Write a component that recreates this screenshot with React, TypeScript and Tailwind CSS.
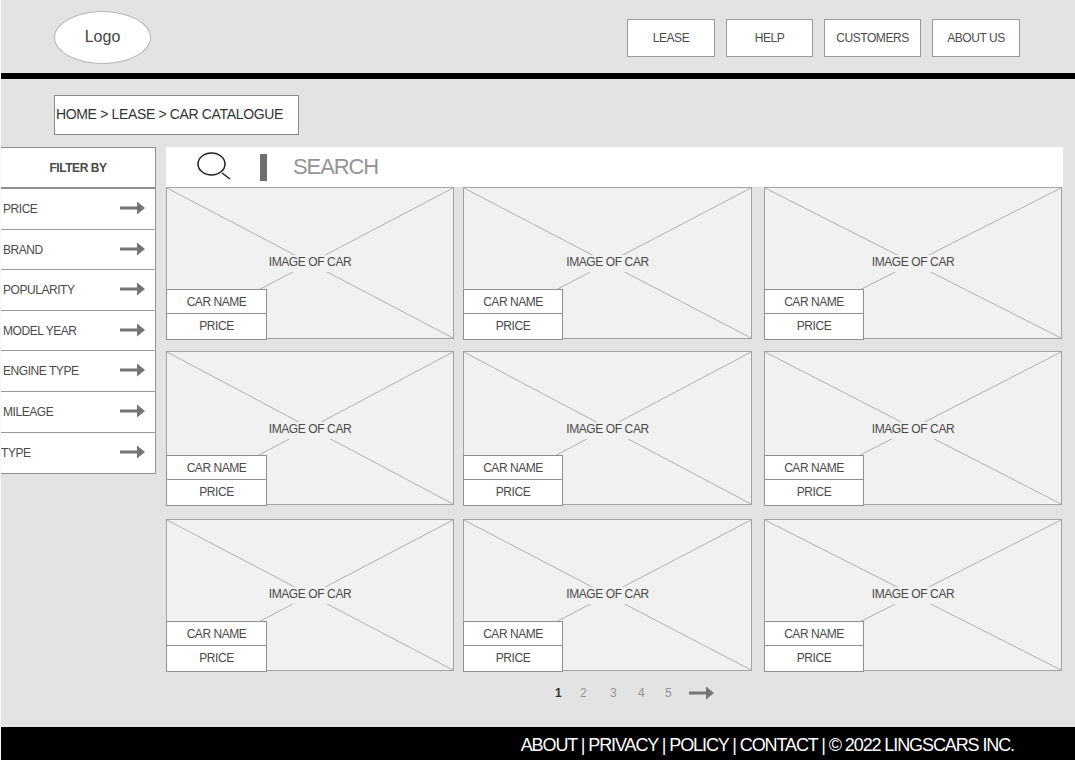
const navItems = [
  { name: "LEASE", width: "w-[88px]" },
  { name: "HELP", width: "w-[87px]" },
  { name: "CUSTOMERS", width: "w-[97px]" },
  { name: "ABOUT US", width: "w-[88px]" },
]

const filters = [
  { name: "PRICE", height: "h-[41px]", pad: "pl-[2px]" },
  { name: "BRAND", height: "h-[40px]", pad: "pl-[2px]" },
  { name: "POPULARITY", height: "h-[41px]", pad: "pl-[2px]" },
  { name: "MODEL YEAR", height: "h-[40px]", pad: "pl-[2px]" },
  { name: "ENGINE TYPE", height: "h-[41px]", pad: "pl-[2px]" },
  { name: "MILEAGE", height: "h-[41px]", pad: "pl-[2px]" },
  { name: "TYPE", height: "h-[40px]", pad: "pl-0" },
]

const rows = [
  { height: "h-[152px]", labelTop: "top-[67px]", margin: "" },
  { height: "h-[154px]", labelTop: "top-[70px]", margin: "mt-[12px]" },
  { height: "h-[152px]", labelTop: "top-[67px]", margin: "mt-[14px]" },
]

const columns = [
  { width: "w-[288px]", tag: "w-[101px]" },
  { width: "ml-[9px] w-[289px]", tag: "w-[100px]" },
  { width: "ml-[12px] w-[298px]", tag: "w-[100px]" },
]

function Arrow({ className }: { className: string }) {
  return (
    <svg viewBox="0 0 25 14" className={className} fill="#757575">
      <rect x="0" y="5.5" width="20" height="3" />
      <path d="M17 0.5 L25 7 L17 13.5 Z" />
    </svg>
  )
}

function CarCard({ height, width, tag, labelTop }: { height: string; width: string; tag: string; labelTop: string }) {
  return (
    <div className={`relative ${height} ${width} border border-[#a3a3a3] bg-[#f1f1f1]`}>
      <svg className="absolute inset-0 h-full w-full" preserveAspectRatio="none" viewBox="0 0 100 100">
        <line x1="0" y1="0" x2="100" y2="100" stroke="#b0b0b0" strokeWidth="1" vectorEffect="non-scaling-stroke" />
        <line x1="100" y1="0" x2="0" y2="100" stroke="#b0b0b0" strokeWidth="1" vectorEffect="non-scaling-stroke" />
      </svg>
      <div className={`absolute inset-x-0 ${labelTop} flex justify-center`}>
        <span className="h-[17px] bg-[#f1f1f1] px-[6px] text-[12px] leading-[15px] tracking-[-0.4px] text-[#4a4a4a]">
          IMAGE OF CAR
        </span>
      </div>
      <div className={`absolute bottom-[-2px] left-[-1px] ${tag} border border-[#8f8f8f] bg-white text-center text-[12px] tracking-[-0.45px] text-[#4a4a4a]`}>
        <div className="flex h-[24px] items-center justify-center border-b border-[#8f8f8f]">CAR NAME</div>
        <div className="flex h-[25px] items-center justify-center pb-[1px]">PRICE</div>
      </div>
    </div>
  )
}

export default function App() {
  return (
    <div className="relative flex h-[760px] w-[1075px] flex-col overflow-hidden border-l border-[#f7f7f7] bg-[#e3e3e3] font-['Liberation_Sans',Arial,sans-serif]">
      <header className="flex h-[73px] shrink-0 items-center justify-between pl-[53px] pr-[55px]">
        <div className="mt-[1px] flex h-[53px] w-[97px] items-center justify-center rounded-[50%] border border-[#b5b5b5] bg-white text-[16px] text-[#444]">
          Logo
        </div>
        <nav className="mt-[2px] flex gap-[11px]">
          {navItems.map((item) => (
            <div
              key={item.name}
              className={`flex h-[38px] ${item.width} items-center justify-center border border-[#9a9a9a] bg-white text-[12px] tracking-[-0.45px] text-[#4a4a4a]`}
            >
              {item.name}
            </div>
          ))}
        </nav>
      </header>
      <div className="h-[6px] shrink-0 bg-black" />

      <div className="mt-[16px] ml-[53px] flex h-[40px] w-[245px] shrink-0 items-center border border-[#8a8a8a] bg-white pb-[1px] pl-px text-[14px] tracking-[-0.35px] text-[#333]">
        HOME &gt; LEASE &gt; CAR CATALOGUE
      </div>

      <main className="mt-[12px] flex items-start gap-[10px]">
        <aside className="w-[155px] shrink-0 border-r border-b border-[#8f8f8f] bg-white tracking-[-0.45px]">
          <div className="flex h-[42px] items-center justify-center border-t border-b-2 border-t-[#8f8f8f] border-b-[#8f8f8f] pt-[1px] text-[12px] font-bold text-[#4a4a4a]">
            FILTER BY
          </div>
          {filters.map((filter, i) => (
            <div
              key={filter.name}
              className={`flex ${filter.height} items-center justify-between ${filter.pad} pr-[10px] text-[12px] text-[#4a4a4a] ${i < filters.length - 1 ? "border-b border-[#9a9a9a]" : ""}`}
            >
              <span>{filter.name}</span>
              <Arrow className="-mt-[2px] h-[14px] w-[25px]" />
            </div>
          ))}
        </aside>

        <section className="w-[897px]">
          <div className="flex h-[40px] items-center bg-white pl-[31px]">
            <svg viewBox="0 0 34 30" className="h-[30px] w-[34px]" fill="none" stroke="#222" strokeWidth="1.5">
              <ellipse cx="14.5" cy="12" rx="13.5" ry="11" />
              <line x1="25" y1="21" x2="33" y2="27" />
            </svg>
            <div className="ml-[29px] h-[27px] w-[7px] bg-[#6e6e6e]" />
            <span className="ml-[26px] -mt-[2px] text-[22px] tracking-[-1.1px] text-[#949494]">SEARCH</span>
          </div>
          {rows.map((row, r) => (
            <div key={r} className={`flex ${row.margin}`}>
              {columns.map((column) => (
                <CarCard key={column.width} height={row.height} width={column.width} tag={column.tag} labelTop={row.labelTop} />
              ))}
            </div>
          ))}
          <div className="mt-[14px] flex h-[16px] items-center pl-[389px] text-[12px] text-[#949494]">
            <span className="w-[25px] font-bold text-[#333]">1</span>
            <span className="w-[30px]">2</span>
            <span className="w-[28px]">3</span>
            <span className="w-[27px]">4</span>
            <span className="w-[24px]">5</span>
            <Arrow className="h-[14px] w-[25px]" />
          </div>
        </section>
      </main>

      <footer className="absolute inset-x-0 bottom-0 flex h-[33px] items-center justify-end bg-black pt-[4px] pr-[61px] text-[18px] tracking-[-1.1px] text-white">
        ABOUT | PRIVACY | POLICY | CONTACT | © 2022 LINGSCARS INC.
      </footer>
    </div>
  )
}
